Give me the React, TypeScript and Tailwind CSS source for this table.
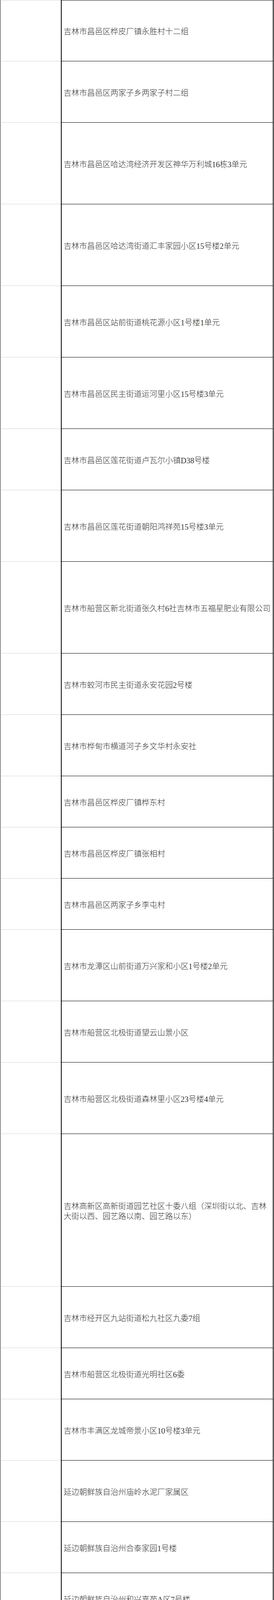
import React from "react";

type Row = { text: string; h: string; blackBottom?: boolean };

const jilin: Row[] = [
  { text: "吉林市昌邑区桦皮厂镇永胜村十二组", h: "h-[157px]" },
  { text: "吉林市昌邑区两家子乡两家子村二组", h: "h-[157px]" },
  { text: "吉林市昌邑区哈达湾经济开发区神华万利城16栋3单元", h: "h-[209px]" },
  { text: "吉林市昌邑区哈达湾街道汇丰家园小区15号楼2单元", h: "h-[209px]" },
  { text: "吉林市昌邑区站前街道桃花源小区1号楼1单元", h: "h-[183px]" },
  { text: "吉林市昌邑区民主街道运河里小区15号楼3单元", h: "h-[183px]" },
  { text: "吉林市昌邑区莲花街道卢瓦尔小镇D38号楼", h: "h-[157px]" },
  { text: "吉林市昌邑区莲花街道朝阳鸿祥苑15号楼3单元", h: "h-[183px]" },
  { text: "吉林市船营区新北街道张久村6社吉林市五福星肥业有限公司", h: "h-[235px]" },
  { text: "吉林市蛟河市民主街道永安花园2号楼", h: "h-[157px]" },
  { text: "吉林市桦甸市横道河子乡文华村永安社", h: "h-[157px]" },
  { text: "吉林市昌邑区桦皮厂镇桦东村", h: "h-[131px]" },
  { text: "吉林市昌邑区桦皮厂镇张相村", h: "h-[131px]" },
  { text: "吉林市昌邑区两家子乡李屯村", h: "h-[131px]" },
  { text: "吉林市龙潭区山前街道万兴家和小区1号楼2单元", h: "h-[183px]" },
  { text: "吉林市船营区北极街道望云山景小区", h: "h-[157px]" },
  { text: "吉林市船营区北极街道森林里小区23号楼4单元", h: "h-[183px]" },
  {
    text: "吉林高新区高新街道园艺社区十委八组（深圳街以北、吉林大街以西、园艺路以南、园艺路以东）",
    h: "h-[391px]",
  },
  { text: "吉林市经开区九站街道松九社区九委7组", h: "h-[157px]" },
  { text: "吉林市船营区北极街道光明社区6委", h: "h-[131px]" },
  { text: "吉林市丰满区龙城帝景小区10号楼3单元", h: "h-[157px]" },
  { text: "延边朝鲜族自治州庙岭水泥厂家属区", h: "h-[157px]" },
  { text: "延边朝鲜族自治州合泰家园1号楼", h: "h-[131px]" },
  { text: "延边朝鲜族自治州和兴嘉苑A区7号楼", h: "h-[131px]" },
  { text: "延边朝鲜族自治州珲春市近海街道合作区可赢国际贸易公司", h: "h-[235px]", blackBottom: true },
];

const shandongRest: Row[] = [
  { text: "烟台市芝罘区黄务街道柏林春天50号楼", h: "h-[158px]" },
  { text: "烟台市蓬莱区紫荆山街道三里桥社区东山楼区18号楼", h: "h-[209px]" },
  { text: "潍坊市潍城区北关街道谷德锦商场", h: "h-[131px]" },
  { text: "潍坊市潍城区城关街道颐园小区", h: "h-[131px]" },
  { text: "淄博市张店区共青团东路恒嘉园55号楼楼", h: "h-[157px]" },
  { text: "淄博市淄川区双杨镇杨寨村", h: "h-[105px]" },
  { text: "淄博市周村区北郊镇新城悦隽江山小区20号楼", h: "h-[183px]" },
  { text: "淄博市周村区文化路街道天苑生活区2号楼", h: "h-[157px]" },
];

function TableRow({ row, first }: { row: Row; first?: boolean }) {
  return (
    <div className={`flex ${row.h}`}>
      <div
        className={`w-[156px] shrink-0 border-l border-black ${
          first ? "border-t border-t-[#d4d4d4]" : ""
        } border-b ${row.blackBottom ? "border-b-black" : "border-b-[#d4d4d4]"}`}
      />
      <div
        className={`flex flex-1 items-center border-l-2 border-r-2 border-b border-black pl-[5px] pr-[2px] pt-[5px] ${
          first ? "border-t" : ""
        }`}
      >
        <p>{row.text}</p>
      </div>
    </div>
  );
}

function RightCell({ text, h, top }: { text: string; h: string; top?: boolean }) {
  return (
    <div
      className={`flex ${h} ${
        top ? "items-start pt-[2px]" : "items-center pt-[5px]"
      } border-b border-black pl-[4px] pr-[2px]`}
    >
      <p>{text}</p>
    </div>
  );
}

export default function App() {
  return (
    <div className="w-[701px] bg-white font-['Liberation_Serif','Noto_Sans_CJK_SC',serif] text-[20px] font-light leading-[26px] text-[#333]">
      {jilin.map((row, i) => (
        <TableRow key={i} row={row} first={i === 0} />
      ))}

      <div className="flex h-[366px]">
        <div className="flex w-[156px] shrink-0 flex-col items-center border-l border-b border-black border-b-[#d4d4d4] pt-[42px]">
          <p>山东省</p>
          <p className="mt-[79px]">51个</p>
        </div>
        <div className="flex flex-1 flex-col border-l-2 border-r-2 border-black">
          <RightCell text="滨州市阳信县翟王镇勾家村" h="h-[105px]" />
          <RightCell text="烟台市芝罘区烟台青华中学" h="h-[104px]" top />
          <RightCell text="烟台市芝罘区世回尧街道惠安小区38号楼" h="h-[157px]" />
        </div>
      </div>

      {shandongRest.map((row, i) => (
        <div key={i} className={`flex ${row.h}`}>
          <div className="w-[156px] shrink-0 border-l border-b border-black border-b-[#d4d4d4]" />
          <div className="flex flex-1 items-center border-l-2 border-r-2 border-b border-black pl-[4px] pr-[2px] pt-[5px]">
            <p>{row.text}</p>
          </div>
        </div>
      ))}
    </div>
  );
}
